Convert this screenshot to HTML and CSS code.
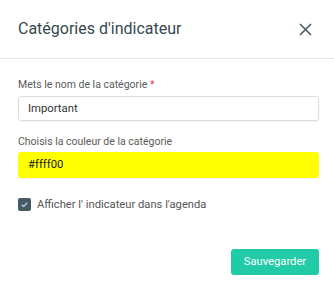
FILE: index.html
```html
<!DOCTYPE html>
<html lang="fr">
<head>
	<meta charset="UTF-8">
	<title>Catégories d'indicateur</title>
	<link rel="stylesheet" href="styles.css">
</head>
<body>
	<div class="modal">
		<div class="modal-header">
			<h2 class="modal-title">Catégories d'indicateur</h2>
			<a class="close" href="javascript:;">
				<svg width="13" height="13" viewBox="0 0 13 13">
					<path d="M1 1 L12 12 M12 1 L1 12" stroke="#455a64" stroke-width="1.6" fill="none"/>
				</svg>
			</a>
		</div>
		<div class="modal-body">
			<label class="field-label">Mets le nom de la catégorie <span class="req">*</span></label>
			<div class="input">Important</div>

			<label class="field-label second">Choisis la couleur de la catégorie</label>
			<div class="input color">#ffff00</div>

			<div class="check-row">
				<span class="checkbox">
					<svg width="13" height="13" viewBox="0 0 13 13">
						<path d="M3.8 6.7 L5.7 8.5 L9.3 4.6" stroke="#cfd8dc" stroke-width="1.2" fill="none"/>
					</svg>
				</span>
				<span class="check-text">Afficher l' indicateur dans l'agenda</span>
			</div>
		</div>
		<div class="modal-footer">
			<a class="btn" href="javascript:;">Sauvegarder</a>
		</div>
	</div>
</body>
</html>
```

FILE: styles.css
```css
body {
	margin: 0;
	background: #fff;
	font-family: Roboto, "Liberation Sans", sans-serif;
}
.modal {
	width: 334px;
	height: 290px;
	background: #fff;
}
.modal-header {
	display: flex;
	align-items: center;
	justify-content: space-between;
	height: 58px;
	padding: 0 22px 0 18px;
	border-bottom: 1px solid #e6e6e6;
}
.modal-title {
	margin: 0;
	font-size: 16px;
	font-weight: 400;
	color: #37474f;
	padding-bottom: 2px;
}
.close {
	display: flex;
	padding-top: 1px;
}
.modal-body {
	padding: 19px 15px 0 18px;
}
.field-label {
	display: block;
	font-size: 10.5px;
	line-height: 13px;
	color: #5a5a5a;
	margin-bottom: 5px;
}
.field-label.second {
	margin-top: 14px;
	margin-bottom: 4px;
}
.req {
	color: #e53950;
}
.input {
	height: 23px;
	line-height: 23px;
	border: 1px solid #dcdcdc;
	border-radius: 3px;
	padding: 0 9px;
	font-size: 11.3px;
	color: #333;
	box-shadow: 0 1px 2px rgba(0, 0, 0, 0.06);
}
.input.color {
	background: #ffff00;
	border-color: #ffff00;
	color: #222;
	height: 24px;
	line-height: 24px;
}
.check-row {
	display: flex;
	align-items: center;
	margin-top: 19px;
	height: 14px;
}
.checkbox {
	display: flex;
	width: 13px;
	height: 13px;
	border-radius: 2px;
	background: #455a64;
	margin-right: 6px;
}
.check-text {
	font-size: 11.2px;
	color: #555;
}
.modal-footer {
	display: flex;
	justify-content: flex-end;
	padding: 38px 15px 0 0;
}
.btn {
	display: block;
	width: 88px;
	height: 26px;
	line-height: 26px;
	text-align: center;
	border-radius: 3px;
	background: #22cba7;
	color: #fff;
	font-size: 11.2px;
	text-decoration: none;
}
```
